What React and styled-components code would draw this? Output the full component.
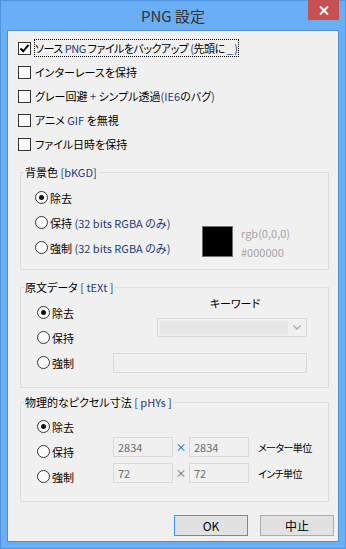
import React from "react";
import styled, { createGlobalStyle } from "styled-components";

const GlobalStyle = createGlobalStyle`
  html, body { margin: 0; padding: 0; }
  body {
    width: 346px;
    height: 549px;
    overflow: hidden;
    font-family: "Noto Sans CJK JP", "Noto Sans", sans-serif;
    font-size: 11px;
    color: #000;
    font-feature-settings: "palt";
  }
`;

const Frame = styled.div`
  box-sizing: border-box;
  width: 346px;
  height: 549px;
  border: 1px solid #4f93e0;
  background: #6aaef4;
  display: flex;
  flex-direction: column;
  padding: 0 6px 6px;
`;

const TitleBar = styled.div`
  height: 29px;
  display: grid;
  grid-template-columns: 1fr auto 1fr;
  align-items: start;
`;

const Title = styled.div`
  grid-column: 2;
  padding-top: 6px;
  font-size: 15px;
  line-height: 18px;
  color: #333;
`;

const CloseButton = styled.div`
  grid-column: 3;
  justify-self: end;
  width: 31px;
  height: 20px;
  margin-top: -1px;
  background: #c75050;
  display: flex;
  align-items: center;
  justify-content: center;
`;

const Client = styled.div`
  flex: 1;
  border: 1px solid #4f8fd8;
  background: #f0f0f0;
  display: flex;
  flex-direction: column;
`;

const CheckList = styled.div`
  padding: 5px 0 0 10px;
  margin-bottom: 8px;
`;

const CheckRow = styled.div`
  height: 24px;
  display: flex;
  align-items: center;
  gap: ${(p) => (p.$focused ? 3 : 4)}px;
`;

const Box = styled.span`
  box-sizing: border-box;
  width: 13px;
  height: 13px;
  border: 1px solid #333;
  background: #fff;
  display: flex;
  align-items: center;
  justify-content: center;
  flex: none;
`;

const CheckLabel = styled.span`
  line-height: 16px;
  padding: 0 1px 0 0;
  border: 1px ${(p) => (p.$focused ? "dotted #000" : "solid transparent")};
  margin-left: ${(p) => (p.$focused ? 0 : -1)}px;
  letter-spacing: ${(p) => (p.$focused ? -0.5 : 0)}px;
`;

const Lat = styled.span`
  color: #22397c;
`;

const Group = styled.fieldset`
  box-sizing: border-box;
  height: ${(p) => p.$height}px;
  margin: ${(p) => p.$top}px 9px 0 12px;
  padding: 0;
  border: 1px solid #dcdcdc;
  min-width: 0;
`;

const Legend = styled.legend`
  margin-left: 3px;
  padding: 0 2px 0 1px;
  line-height: 16px;
`;

const GroupBody = styled.div`
  display: flex;
  align-items: flex-start;
  padding-left: ${(p) => p.$inset}px;
`;

const RadioCol = styled.div`
  width: ${(p) => p.$width}px;
  padding-top: ${(p) => p.$pad}px;
  flex: none;
`;

const RadioRow = styled.div`
  height: 25px;
  display: flex;
  align-items: center;
  gap: 2px;
`;

const Circle = styled.span`
  box-sizing: border-box;
  width: 13px;
  height: 13px;
  border-radius: 50%;
  border: 1px solid #333;
  background: #fff;
  display: flex;
  align-items: center;
  justify-content: center;
  flex: none;

  &::after {
    content: "";
    width: 5px;
    height: 5px;
    border-radius: 50%;
    background: ${(p) => (p.$on ? "#111" : "transparent")};
  }
`;

const SwatchArea = styled.div`
  padding-top: 41px;
  display: flex;
  align-items: center;
  gap: 8px;
`;

const Swatch = styled.div`
  box-sizing: border-box;
  width: 31px;
  height: 31px;
  background: #000;
  border: 1px solid #6e6e6e;
`;

const SwatchInfo = styled.div`
  margin-top: 3px;
  line-height: 19px;
  color: #a6a6a6;
`;

const TextCol = styled.div`
  width: 194px;
  display: flex;
  flex-direction: column;
  align-items: flex-end;
`;

const KeywordLabel = styled.div`
  width: 150px;
  padding-left: 6px;
  box-sizing: border-box;
  text-align: center;
  line-height: 16px;
`;

const Combo = styled.div`
  box-sizing: border-box;
  width: 150px;
  height: 19px;
  margin-top: 7px;
  border: 1px solid #d9d9d9;
  background: #f0f0f0;
  display: flex;
  align-items: center;
  padding: 2px;
  gap: 2px;
`;

const ComboField = styled.div`
  flex: 1;
  align-self: stretch;
  background: #e6e6e6;
`;

const ComboArrow = styled.div`
  width: 14px;
  display: flex;
  justify-content: center;
`;

const TextBox = styled.div`
  box-sizing: border-box;
  width: ${(p) => p.$width}px;
  height: 20px;
  margin-top: ${(p) => p.$top || 0}px;
  border: 1px solid #d9d9d9;
  background: #f0f0f0;
  color: #6d6d6d;
  padding: 0 4px;
  line-height: 18px;
`;

const SizeCol = styled.div`
  padding-top: 27px;
  display: flex;
  flex-direction: column;
  gap: 6px;
`;

const SizeRow = styled.div`
  display: flex;
  align-items: center;
  height: 20px;
`;

const Times = styled.span`
  width: 16px;
  text-align: center;
  color: ${(p) => p.$tint};
`;

const Unit = styled.span`
  margin-left: 9px;
  font-size: 10px;
  letter-spacing: -0.6px;
`;

const ButtonRow = styled.div`
  display: flex;
  justify-content: flex-end;
  gap: 12px;
  margin-top: 13px;
  padding-right: 4px;
`;

const Button = styled.div`
  box-sizing: border-box;
  width: 74px;
  height: 21px;
  background: #e1e1e1;
  border: 1px solid ${(p) => (p.$default ? "#3399ff" : "#adadad")};
  display: flex;
  align-items: center;
  justify-content: center;
  font-size: 12px;
  line-height: 16px;
`;

const Check = () => (
  <svg width="11" height="11" viewBox="0 0 11 11">
    <path d="M1.5 5.5 L4.2 8.3 L9.5 1.8" fill="none" stroke="#000" strokeWidth="2" />
  </svg>
);

const CheckItem = ({ checked, focused, children }) => (
  <CheckRow $focused={focused}>
    <Box>{checked && <Check />}</Box>
    <CheckLabel $focused={focused}>{children}</CheckLabel>
  </CheckRow>
);

const Radio = ({ on, children }) => (
  <RadioRow>
    <Circle $on={on} />
    <span>{children}</span>
  </RadioRow>
);

const StateRadios = () => (
  <>
    <Radio on>除去</Radio>
    <Radio>保持</Radio>
    <Radio>強制</Radio>
  </>
);

export default function App() {
  return (
    <>
      <GlobalStyle />
      <Frame>
        <TitleBar>
          <Title>PNG 設定</Title>
          <CloseButton>
            <svg width="10" height="9" viewBox="0 0 10 9">
              <path d="M1 0.5 L9 8.5 M9 0.5 L1 8.5" stroke="#fff" strokeWidth="2" />
            </svg>
          </CloseButton>
        </TitleBar>
        <Client>
          <CheckList>
            <CheckItem checked focused>
              ソース <Lat>PNG</Lat> ファイルをバックアップ <Lat>(</Lat>先頭に <Lat>_ )</Lat>
            </CheckItem>
            <CheckItem>インターレースを保持</CheckItem>
            <CheckItem>
              グレー回避 <Lat>+</Lat> シンプル透過<Lat>(IE6</Lat>のバグ<Lat>)</Lat>
            </CheckItem>
            <CheckItem>
              アニメ <Lat>GIF</Lat> を無視
            </CheckItem>
            <CheckItem>ファイル日時を保持</CheckItem>
          </CheckList>

          <Group $height={106} $top={0}>
            <Legend>
              背景色 <Lat>[bKGD]</Lat>
            </Legend>
            <GroupBody $inset={14}>
              <RadioCol $width={167} $pad={5}>
                <Radio on>除去</Radio>
                <Radio>
                  保持 <Lat>(32 bits RGBA のみ)</Lat>
                </Radio>
                <Radio>
                  強制 <Lat>(32 bits RGBA のみ)</Lat>
                </Radio>
              </RadioCol>
              <SwatchArea>
                <Swatch />
                <SwatchInfo>
                  <div>rgb(0,0,0)</div>
                  <div>#000000</div>
                </SwatchInfo>
              </SwatchArea>
            </GroupBody>
          </Group>

          <Group $height={109} $top={9}>
            <Legend>
              原文データ <Lat>[ tEXt ]</Lat>
            </Legend>
            <GroupBody $inset={16}>
              <RadioCol $width={76} $pad={5}>
                <StateRadios />
              </RadioCol>
              <TextCol>
                <KeywordLabel>キーワード</KeywordLabel>
                <Combo>
                  <ComboField />
                  <ComboArrow>
                    <svg width="8" height="5" viewBox="0 0 8 5">
                      <path d="M0.5 0.5 L4 4 L7.5 0.5" fill="none" stroke="#a8a8a8" strokeWidth="1.3" />
                    </svg>
                  </ComboArrow>
                </Combo>
                <TextBox $width={194} $top={16} />
              </TextCol>
            </GroupBody>
          </Group>

          <Group $height={108} $top={6}>
            <Legend>
              物理的なピクセル寸法 <Lat>[ pHYs ]</Lat>
            </Legend>
            <GroupBody $inset={16}>
              <RadioCol $width={76} $pad={4}>
                <StateRadios />
              </RadioCol>
              <SizeCol>
                <SizeRow>
                  <TextBox $width={60}>2834</TextBox>
                  <Times $tint="#2a4f9a">×</Times>
                  <TextBox $width={60}>2834</TextBox>
                  <Unit>メーター単位</Unit>
                </SizeRow>
                <SizeRow>
                  <TextBox $width={60}>72</TextBox>
                  <Times $tint="#8a5a22">×</Times>
                  <TextBox $width={60}>72</TextBox>
                  <Unit>インチ単位</Unit>
                </SizeRow>
              </SizeCol>
            </GroupBody>
          </Group>

          <ButtonRow>
            <Button $default>OK</Button>
            <Button>中止</Button>
          </ButtonRow>
        </Client>
      </Frame>
    </>
  );
}
